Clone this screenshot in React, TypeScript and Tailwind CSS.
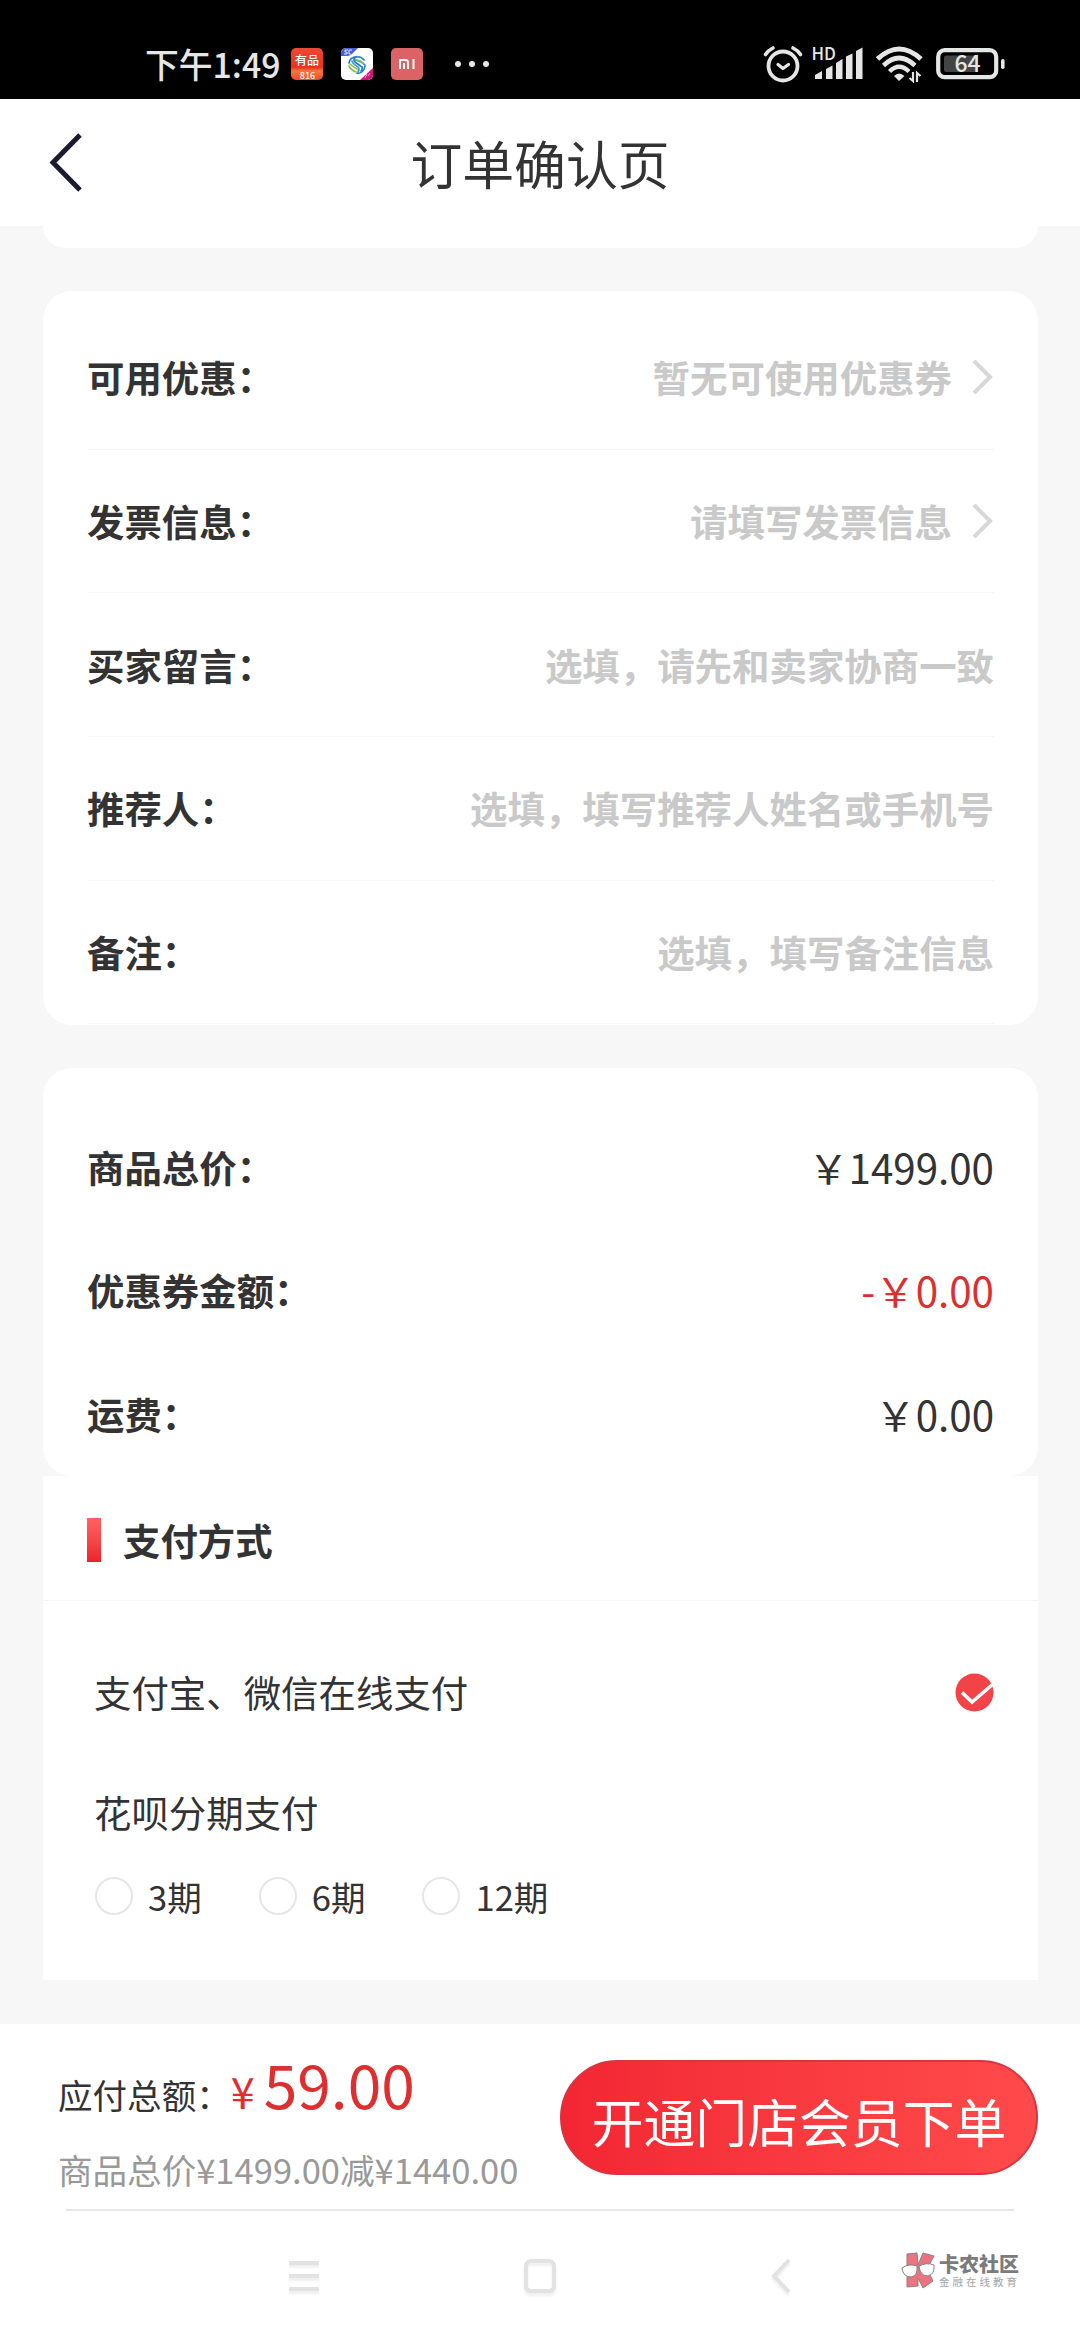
import type { ReactNode } from "react";

type FormRow = { label: string; hint: string; arrow?: boolean };

const formRows: FormRow[] = [
  { label: "可用优惠：", hint: "暂无可使用优惠券", arrow: true },
  { label: "发票信息：", hint: "请填写发票信息", arrow: true },
  { label: "买家留言：", hint: "选填，请先和卖家协商一致" },
  { label: "推荐人：", hint: "选填，填写推荐人姓名或手机号" },
  { label: "备注：", hint: "选填，填写备注信息" },
];

const priceRows = [
  { label: "商品总价：", value: "￥1499.00" },
  { label: "优惠券金额：", value: "-￥0.00", red: true },
  { label: "运费：", value: "￥0.00" },
];

const installments = ["3期", "6期", "12期"];

function AppIcons() {
  return (
    <div className="ml-[11px] flex gap-[18px]">
      <svg width="32" height="32" viewBox="0 0 32 32">
        <defs>
          <linearGradient id="youpin" x1="0" y1="0" x2="0" y2="1">
            <stop offset="0" stopColor="#ee4a34" />
            <stop offset="0.6" stopColor="#ea2f22" />
            <stop offset="0.72" stopColor="#f4783c" />
            <stop offset="1" stopColor="#ee4a2c" />
          </linearGradient>
        </defs>
        <rect width="32" height="32" rx="5" fill="url(#youpin)" />
        <text x="16" y="17" textAnchor="middle" fontSize="12" fontWeight="500" fill="#fff">有品</text>
        <text x="16.500" y="30.500" textAnchor="middle" fontSize="9" fontWeight="500" fill="#fff">816</text>
      </svg>
      <svg width="32" height="32" viewBox="0 0 32 32">
        <defs>
          <clipPath id="cmcc"><rect width="32" height="32" rx="5" /></clipPath>
        </defs>
        <g clipPath="url(#cmcc)">
          <rect width="32" height="32" fill="#fff" />
          <path d="M0 0H17L11 6Q9 8 6 8H0Z" fill="#4661d6" />
          <path d="M4 2H7M4 2V4H6V6H3M11 2H8V6H10" fill="none" stroke="#dfe5ff" strokeWidth="1" />
          <path d="M32 20V32H19Z" fill="#d3137c" />
          <path d="M24 30L26 26M27 28L29 25" stroke="#f0a0cc" strokeWidth="1" />
          <g fill="none" strokeWidth="1.7" strokeLinecap="round">
            <path d="M8 15Q9 9 16 8.500Q11 11 14 14L21 19Q22 21 20 23" stroke="#1f7fc4" />
            <path d="M11 13Q12 16 17 19Q19 21 17 24" stroke="#3b9bd0" />
            <path d="M24 18Q23 25 16 25.500" stroke="#1f7fc4" />
            <path d="M16 9Q20 8 23 12M14 12Q20 13 24 17" stroke="#2f8fcb" />
            <path d="M8 18Q10 22 15 24M9 16Q12 19 16 21M16 12Q19 12 22 15" stroke="#8cc152" />
          </g>
        </g>
      </svg>
      <svg width="32" height="32" viewBox="0 0 32 32">
        <rect width="32" height="32" rx="5" fill="#db6265" />
        <path d="M9 21V12H14.500Q17 12 17 14.500V21M13 15V21M22.500 11V21" fill="none" stroke="#fff" strokeWidth="2" />
      </svg>
    </div>
  );
}

function StatusBar() {
  return (
    <div className="flex h-[99px] items-center justify-between bg-black pt-[29px] pr-[75px] pl-[145px] text-[#e6e6e6]">
      <div className="flex items-center">
        <span className="text-[33.800px] leading-[40px] font-medium">下午1:49</span>
        <AppIcons />
        <svg className="ml-[31px]" width="36" height="8" viewBox="0 0 36 8" fill="currentColor">
          <circle cx="4" cy="4" r="3" />
          <circle cx="18" cy="4" r="3" />
          <circle cx="32" cy="4" r="3" />
        </svg>
      </div>
      <div className="flex items-center">
        <svg width="40" height="38" viewBox="0 0 40 38" fill="none" stroke="currentColor" strokeLinecap="round">
          <circle cx="20" cy="21" r="14.500" strokeWidth="3.800" />
          <path d="M15 19.500L20 23.500L25.500 19.500" strokeWidth="3.200" strokeLinejoin="round" />
          <path d="M2.500 9.500Q5 5.500 10 3M37.500 9.500Q35 5.500 30 3" strokeWidth="3.600" />
        </svg>
        <svg className="ml-[9px] overflow-visible" width="54" height="38" viewBox="0 0 54 38" fill="currentColor">
          <text x="-0.500" y="15" fontSize="17" fontWeight="500">HD</text>
          <path d="M3 34V30L10 26V34ZM14 34V24L20.500 20.500V34ZM24 34V18L30.500 14V34ZM34 34V11.500L40.500 8.500V34ZM44 34V6L50.500 2.500V34Z" />
        </svg>
        <svg className="ml-[10px]" width="48" height="38" viewBox="0 0 48 38" fill="none" stroke="currentColor">
          <path d="M1.500 14Q23 -6 45 14" strokeWidth="5" />
          <path d="M7.500 20.500Q23 5.500 39 20.500" strokeWidth="4.600" />
          <path d="M13.500 26.500Q23 17 33 26.500" strokeWidth="4.400" />
          <path d="M18 31Q23 26 28.500 31L23 36Z" fill="currentColor" stroke="none" />
          <path d="M37 27V36L33.500 33M41 37V28L44.500 31" strokeWidth="2.200" />
        </svg>
        <svg className="ml-[12px] overflow-visible" width="69" height="32" viewBox="0 0 69 32">
          <rect x="2.200" y="2.200" width="58" height="27" rx="6.500" fill="none" stroke="currentColor" strokeWidth="4.200" />
          <rect x="8" y="7.500" width="34" height="16.500" rx="2" fill="#444" />
          <rect x="65" y="11" width="3.600" height="10" rx="1.800" fill="currentColor" />
          <text x="31.500" y="24" textAnchor="middle" fontSize="23" fontWeight="500" fill="currentColor">64</text>
        </svg>
      </div>
    </div>
  );
}

function Header() {
  return (
    <header className="grid h-[127px] grid-cols-[1fr_auto_1fr] items-center bg-white">
      <svg className="ml-[48px]" width="36" height="60" viewBox="0 0 36 60" fill="none">
        <path d="M32 2L5 29.500L32 57" stroke="#1b1b30" strokeWidth="5" />
      </svg>
      <h1 className="text-[51.840px] leading-[64px]">订单确认页</h1>
    </header>
  );
}

function Card({ className, children }: { className?: string; children?: ReactNode }) {
  return <section className={`mx-[43px] w-[995px] bg-white px-[44px] ${className ?? ""}`}>{children}</section>;
}

function ArrowRight() {
  return (
    <svg className="ml-[20px]" width="22" height="36" viewBox="0 0 22 36" fill="none">
      <path d="M2 2L18 18L2 34" stroke="#d8d8d8" strokeWidth="4" />
    </svg>
  );
}

function PaymentSection() {
  return (
    <section className="mx-[43px] h-[504px] w-[995px] bg-white">
      <div className="flex h-[125px] items-center border-b border-[#f5f5f5] pl-[44px]">
        <span className="mb-[-3px] h-[44px] w-[14px] bg-linear-to-b from-[#ff6264] to-[#ee1f2c]" />
        <h2 className="mt-[4px] ml-[22px] text-[37.440px] leading-[44px] font-bold">支付方式</h2>
      </div>
      <div className="pt-[65px] pr-[44px] pl-[51px]">
        <div className="flex h-[52px] items-center justify-between">
          <span className="text-[37.440px] leading-[52px]">支付宝、微信在线支付</span>
          <svg width="39" height="39" viewBox="0 0 39 39" fill="none">
            <circle cx="19.500" cy="19.500" r="19" fill="#f34248" />
            <path d="M7 19.500L17 29L37.500 11.500" stroke="#fff" strokeWidth="3.600" />
          </svg>
        </div>
        <div className="mt-[68px] text-[37.440px] leading-[52px]">花呗分期支付</div>
        <div className="mt-[33px] ml-[1px] flex h-[50px] items-center gap-[57px]">
          {installments.map((name) => (
            <label key={name} className="flex items-center gap-[15px] text-[34.560px] leading-[50px]">
              <span className="size-[38px] rounded-full border-2 border-[#e6e6e6]" />
              {name}
            </label>
          ))}
        </div>
      </div>
    </section>
  );
}

function CheckoutBar() {
  return (
    <footer className="flex h-[185px] items-start justify-between pr-[42px] pl-[58px]">
      <div>
        <div className="mt-[19px] flex items-baseline leading-[80px]">
          <span className="text-[34.560px]">应付总额：</span>
          <span className="text-[43.200px] text-[#dd2f30]">¥</span>
          <span className="ml-[9px] text-[60.480px] text-[#dd2f30]">59.00</span>
        </div>
        <div className="mt-[10px] text-[34.560px] leading-[50px] text-[#999]">商品总价¥1499.00减¥1440.00</div>
      </div>
      <button className="mt-[36px] h-[115px] w-[478px] rounded-full border-2 border-[#d93540] bg-linear-to-r from-[#f22633] to-[#ff4a4b] pt-[7px] text-[51.840px] leading-[64px] whitespace-nowrap text-white">
        开通门店会员下单
      </button>
    </footer>
  );
}

function Watermark() {
  return (
    <div className="flex items-center gap-[3px]">
      <svg width="36" height="38" viewBox="0 0 36 38" stroke="#8a8080" strokeWidth="1">
        <path d="M7 2L17 1L18 13L23 1L34 4L27 17L33 29L23 36L18 26V34L7 35Z" fill="#ea7480" />
        <path d="M2 16Q9 11 17 14Q18 24 11 25Q3 25 2 16Z" fill="#fff" />
        <path d="M19 14Q27 10 34 13Q35 22 28 24Q20 24 19 14Z" fill="#fff" />
      </svg>
      <div className="flex flex-col">
        <span className="text-[20px] leading-[22px] font-black text-[#7b7b7b]">卡农社区</span>
        <span className="text-[10.500px] leading-[14px] tracking-[3px] text-[#a5a5a5]">金融在线教育</span>
      </div>
    </div>
  );
}

function NavBar() {
  return (
    <nav className="flex flex-1 items-center pl-[288px]">
      <svg className="drop-shadow-[0_3px_1px_#f0f0f0]" width="32" height="34" viewBox="0 0 32 34" stroke="#e2e2e2" strokeWidth="4">
        <path d="M1 4H31M1 17H31M1 30H31" />
      </svg>
      <svg className="ml-[203px] drop-shadow-[0_3px_1px_#f0f0f0]" width="34" height="36" viewBox="0 0 34 36" fill="none">
        <rect x="3" y="3" width="28" height="30" rx="5" stroke="#e2e2e2" strokeWidth="4" />
      </svg>
      <svg className="ml-[213px] drop-shadow-[0_3px_1px_#f0f0f0]" width="22" height="38" viewBox="0 0 22 38" fill="none">
        <path d="M19 3L4 19L19 35" stroke="#e2e2e2" strokeWidth="4" />
      </svg>
      <div className="mb-[10px] ml-[108px]">
        <Watermark />
      </div>
    </nav>
  );
}

export default function App() {
  return (
    <div className="flex h-[2340px] w-[1080px] flex-col overflow-hidden bg-[#f7f7f7] font-['Noto_Sans_CJK_SC',sans-serif] text-[#333]">
      <StatusBar />
      <Header />

      {/* tail of the goods card, scrolled under the header */}
      <Card className="h-[22px] rounded-b-[29px]" />

      <Card className="mt-[43px] h-[734px] rounded-[29px] pt-[15px]">
        {formRows.map((row) => (
          <div
            key={row.label}
            className="flex h-[143.700px] items-center justify-between border-b border-[#f5f5f5] text-[37.440px] leading-[54px] font-bold"
          >
            <span>{row.label}</span>
            <span className="flex items-center text-[#c9c9c9]">
              {row.hint}
              {row.arrow && <ArrowRight />}
            </span>
          </div>
        ))}
      </Card>

      <Card className="mt-[43px] h-[408px] rounded-[29px] pt-[37px]">
        {priceRows.map((row) => (
          <div key={row.label} className="flex h-[123.500px] items-center justify-between">
            <span className="text-[37.440px] leading-[54px] font-bold">{row.label}</span>
            <span className={`text-[40.320px] leading-[58px] ${row.red ? "text-[#dd2f30]" : ""}`}>{row.value}</span>
          </div>
        ))}
      </Card>

      <PaymentSection />

      <div className="mt-[44px] flex flex-1 flex-col bg-white">
        <CheckoutBar />
        <div className="mx-[66px] h-[2px] bg-[#e6e6e6]" />
        <NavBar />
      </div>
    </div>
  );
}
